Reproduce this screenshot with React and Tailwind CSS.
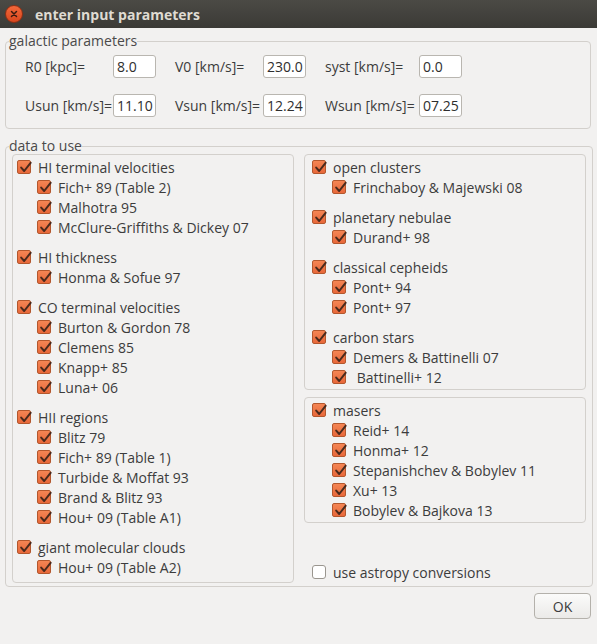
const left = [
  { title: "HI terminal velocities", items: ["Fich+ 89 (Table 2)", "Malhotra 95", "McClure-Griffiths & Dickey 07"] },
  { title: "HI thickness", items: ["Honma & Sofue 97"] },
  { title: "CO terminal velocities", items: ["Burton & Gordon 78", "Clemens 85", "Knapp+ 85", "Luna+ 06"] },
  { title: "HII regions", items: ["Blitz 79", "Fich+ 89 (Table 1)", "Turbide & Moffat 93", "Brand & Blitz 93", "Hou+ 09 (Table A1)"] },
  { title: "giant molecular clouds", items: ["Hou+ 09 (Table A2)"] },
];

const right = [
  { title: "open clusters", items: ["Frinchaboy & Majewski 08"] },
  { title: "planetary nebulae", items: ["Durand+ 98"] },
  { title: "classical cepheids", items: ["Pont+ 94", "Pont+ 97"] },
  { title: "carbon stars", items: ["Demers & Battinelli 07", "\u00a0Battinelli+ 12"] },
];

const masers = { title: "masers", items: ["Reid+ 14", "Honma+ 12", "Stepanishchev & Bobylev 11", "Xu+ 13", "Bobylev & Bajkova 13"] };

function Box({ checked = true }) {
  if (!checked) {
    return <span className="w-[14px] h-[14px] rounded-[3px] border border-[#9a968f] bg-white shrink-0" />;
  }
  return (
    <span className="relative w-[14px] h-[14px] rounded-[2px] border border-[#b3572d] bg-gradient-to-b from-[#f48553] to-[#e8683a] shrink-0">
      <svg className="absolute left-[1px] top-[0px]" width="13" height="13" viewBox="0 0 13 13">
        <path d="M2.2 6.6 L5.2 10 L11.6 1.8" fill="none" stroke="#4a2a1c" strokeWidth="2" strokeLinecap="round" strokeLinejoin="round" />
      </svg>
    </span>
  );
}

function Row({ label, checked = true, indent = false }) {
  return (
    <div className={"flex items-center h-[20px] gap-[7px] " + (indent ? "pl-[20px]" : "")}>
      <Box checked={checked} />
      <span className="whitespace-nowrap">{label}</span>
    </div>
  );
}

function Group({ g }) {
  return (
    <div className="flex flex-col">
      <Row label={g.title} />
      {g.items.map((it) => (
        <Row key={it} label={it} indent />
      ))}
    </div>
  );
}

function Field({ label, value, w }) {
  return (
    <div className="flex items-center">
      <span className={"whitespace-nowrap " + w}>{label}</span>
      <span className="w-[43px] h-[23px] bg-white border border-[#b9b6b0] rounded-[3px] flex items-center pl-[3px] text-[#2e2e2e]">
        {value}
      </span>
    </div>
  );
}

export default function App() {
  return (
    <div
      className="w-[597px] h-[644px] bg-[#f2f1f0] text-[#3c3c3c] text-[14px] flex flex-col"
      style={{ fontFamily: '"Open Sans", "Noto Sans", sans-serif' }}
    >
      {/* title bar */}
      <div className="h-[28px] bg-gradient-to-b from-[#4b4a45] to-[#3b3a36] flex items-center shrink-0">
        <span className="ml-[5px] w-[18px] h-[18px] rounded-full bg-gradient-to-b from-[#f2683a] to-[#d9461d] border border-[#8f2f14] flex items-center justify-center">
          <svg width="8" height="8" viewBox="0 0 8 8">
            <path d="M1.5 1.5 L6.5 6.5 M6.5 1.5 L1.5 6.5" stroke="#3b1a10" strokeWidth="1.5" strokeLinecap="round" />
          </svg>
        </span>
        <span className="ml-[12px] font-bold text-[14px] text-[#dfdbd2]">enter input parameters</span>
      </div>

      {/* galactic parameters */}
      <fieldset className="mt-[4px] ml-[5px] mr-[6px] border border-[#d3d0cc] rounded-[4px]">
        <legend className="ml-[3px] leading-[18px] text-[#4a4a4a]">galactic parameters</legend>
        <div className="flex flex-col gap-[16px] pl-[19px] pt-[5px] pb-[11px]">
          <div className="flex gap-[19px]">
            <Field label="R0 [kpc]=" value="8.0" w="w-[88px]" />
            <Field label="V0 [km/s]=" value="230.0" w="w-[88px]" />
            <Field label="syst [km/s]=" value="0.0" w="w-[94px]" />
          </div>
          <div className="flex gap-[19px]">
            <Field label="Usun [km/s]=" value="11.10" w="w-[88px]" />
            <Field label="Vsun [km/s]=" value="12.24" w="w-[88px]" />
            <Field label="Wsun [km/s]=" value="07.25" w="w-[94px]" />
          </div>
        </div>
      </fieldset>

      {/* data to use */}
      <fieldset className="mt-[8px] ml-[5px] mr-[5px] border border-[#d3d0cc] rounded-[4px]">
        <legend className="ml-[3px] leading-[18px] text-[#4a4a4a]">data to use</legend>
        <div className="flex gap-[10px] h-[429px] px-[6px] mb-[3px] -mt-[1px]">
          <div className="w-[282px] border border-[#d3d0cc] rounded-[4px] pl-[4px] pt-[2px] flex flex-col gap-[10px]">
            {left.map((g) => (
              <Group key={g.title} g={g} />
            ))}
          </div>
          <div className="w-[282px] flex flex-col">
            <div className="border border-[#d3d0cc] rounded-[4px] pl-[7px] pt-[2px] pb-[2px] flex flex-col gap-[10px]">
              {right.map((g) => (
                <Group key={g.title} g={g} />
              ))}
            </div>
            <div className="mt-[7px] border border-[#d3d0cc] rounded-[4px] pl-[7px] pt-[2px] pb-[2px]">
              <Group g={masers} />
            </div>
            <div className="mt-auto pl-[8px] pb-[1px]">
              <Row label="use astropy conversions" checked={false} />
            </div>
          </div>
        </div>
      </fieldset>

      <div className="flex justify-end mr-[6px] mt-[6px]">
        <button className="w-[57px] h-[26px] rounded-[4px] border border-[#b4b1ab] bg-gradient-to-b from-[#fbfbfa] to-[#ebeae8] text-[#3c3c3c] text-[14px]">
          OK
        </button>
      </div>
    </div>
  );
}
